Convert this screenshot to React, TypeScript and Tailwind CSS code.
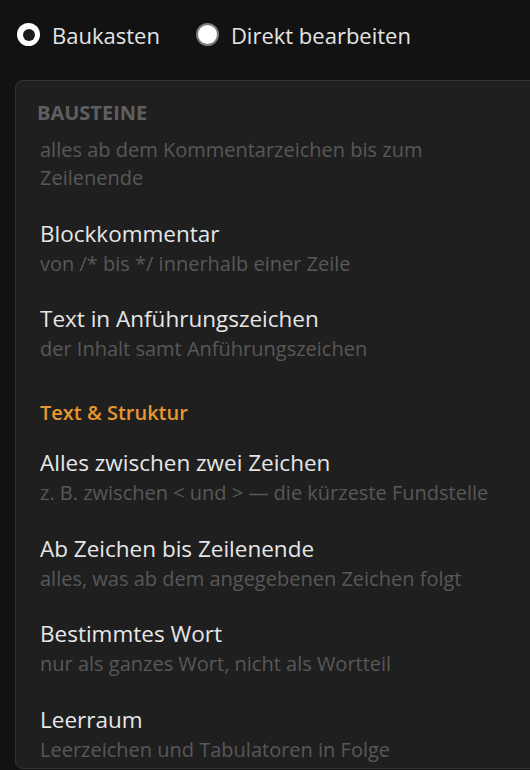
import React from "react";

type Item = { title?: string; desc: string };

const bausteine: Item[] = [
  { desc: "alles ab dem Kommentarzeichen bis zum Zeilenende" },
  { title: "Blockkommentar", desc: "von /* bis */ innerhalb einer Zeile" },
  { title: "Text in Anführungszeichen", desc: "der Inhalt samt Anführungszeichen" },
];

const struktur: Item[] = [
  { title: "Alles zwischen zwei Zeichen", desc: "z. B. zwischen < und > — die kürzeste Fundstelle" },
  { title: "Ab Zeichen bis Zeilenende", desc: "alles, was ab dem angegebenen Zeichen folgt" },
  { title: "Bestimmtes Wort", desc: "nur als ganzes Wort, nicht als Wortteil" },
  { title: "Leerraum", desc: "Leerzeichen und Tabulatoren in Folge" },
];

const Radio = ({ checked, label }: { checked: boolean; label: string }) => (
  <label className="flex items-center gap-[12px] cursor-pointer">
    {checked ? (
      <span className="w-[23px] h-[23px] rounded-full bg-white flex items-center justify-center">
        <span className="w-[12px] h-[12px] rounded-full bg-[#1c1c1c]" />
      </span>
    ) : (
      <span className="w-[23px] h-[23px] rounded-full bg-white border-2 border-[#7a7a7a]" />
    )}
    <span className="text-[22px] leading-[30px] text-[#e4e4e4]">{label}</span>
  </label>
);

const Entry = ({ item }: { item: Item }) => (
  <div className="pl-[24px] mb-[24.5px]">
    {item.title && (
      <div className="text-[22.5px] leading-[33px] text-[#e6e6e6]">{item.title}</div>
    )}
    <div className="text-[20px] leading-[28px] text-[#585858] w-[462px]">{item.desc}</div>
  </div>
);

export default function App() {
  return (
    <div
      className="h-[770px] w-[530px] overflow-hidden bg-[#121212]"
      style={{ fontFamily: '"Open Sans", "Noto Sans", sans-serif' }}
    >
      {/* Mode switch */}
      <div className="flex items-center gap-[36px] pl-[17px] pt-[19px] h-[50px]">
        <Radio checked label="Baukasten" />
        <Radio checked={false} label="Direkt bearbeiten" />
      </div>

      {/* Building blocks list */}
      <div className="ml-[15px] mt-[30px] w-[560px] h-[689px] rounded-[8px] border border-[#333333] bg-[#1f1f1f] pt-[17px]">
        <div className="pl-[21px] text-[20px] leading-[30px] font-bold text-[#5f5f5f]">BAUSTEINE</div>
        <div className="mt-[8px]">
          {bausteine.map((it, i) => (
            <Entry key={i} item={it} />
          ))}
        </div>
        <div className="pl-[24px] pt-[10px] text-[20px] leading-[30px] font-semibold text-[#e8962e] mb-[18.5px]">
          Text &amp; Struktur
        </div>
        {struktur.map((it, i) => (
          <Entry key={i} item={it} />
        ))}
      </div>
    </div>
  );
}
